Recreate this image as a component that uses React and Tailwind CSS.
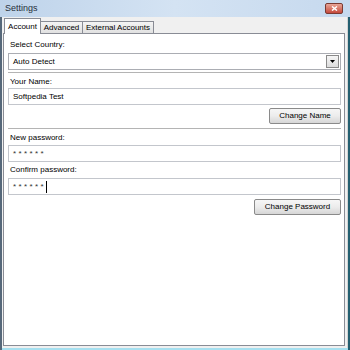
import React from "react"

const font = { fontFamily: "'Liberation Sans', Arial, sans-serif" }

function Field({ children, cursor }) {
  return (
    <div className="h-[17px] border border-[#c3c6cc] bg-white flex items-center pl-[4px] text-black">
      {children}
      {cursor && <span className="w-px h-[12px] bg-black" />}
    </div>
  )
}

function Stars() {
  return <span className="text-[8px] tracking-[2.4px] text-[#333]">******</span>
}

function Button({ children, width }) {
  return (
    <div
      className={`${width} h-[16px] border border-[#8a8a8a] rounded-[2px] bg-gradient-to-b from-[#f6f6f6] via-[#ececec] to-[#d6d6d6] flex items-center justify-center text-black`}
    >
      {children}
    </div>
  )
}

function Separator() {
  return <div className="h-[2px] border-t border-t-[#b4b4b4] border-b border-b-white" />
}

export default function App() {
  return (
    <div className="w-[350px] h-[350px] flex flex-col bg-[#1d5f73] overflow-hidden" style={font}>
      {/* title bar */}
      <div className="h-[17px] shrink-0 flex items-center justify-between bg-gradient-to-r from-[#bed3ea] via-[#d4e3f3] to-[#c6d9ee] pl-[5px] pr-[7px]">
        <span className="text-[9px] text-[#26303a] leading-none">Settings</span>
        <div className="w-[18px] h-[11px] rounded-[2px] border border-[#7a3a32] bg-gradient-to-b from-[#e7a598] to-[#c4473a] flex items-center justify-center">
          <svg width="7" height="5" viewBox="0 0 7 5">
            <path d="M1 0.5 L6 4.5 M6 0.5 L1 4.5" stroke="white" strokeWidth="1.5" />
          </svg>
        </div>
      </div>
      {/* body */}
      <div className="flex-1 flex flex-col border-l-[2px] border-l-[#56687a] border-r-[2px] border-r-[#245f70]">
        <div className="flex-1 flex flex-col bg-[#f0f0f0] pl-px pr-[2px] pb-[2px] border-r border-r-[#d4d4d4]">
          {/* tabs */}
          <div className="h-[16px] shrink-0 flex items-end pl-px text-[8px] text-black">
            <div className="h-[16px] w-[37px] border border-b-0 border-[#898c95] bg-white flex items-center justify-center relative z-10 -mb-px">
              Account
            </div>
            <div className="h-[12px] w-[42px] border border-b-0 border-l-0 border-[#898c95] bg-gradient-to-b from-[#f4f4f4] to-[#e1e1e1] flex items-center justify-center">
              Advanced
            </div>
            <div className="h-[12px] w-[71px] border border-b-0 border-l-0 border-[#898c95] bg-gradient-to-b from-[#f4f4f4] to-[#e1e1e1] flex items-center justify-center">
              External Accounts
            </div>
          </div>
          {/* panel */}
          <div className="flex-1 border border-[#898c95] bg-white pl-[4px] pr-[3px] pt-[6px] flex flex-col text-[8px] text-black">
            <div className="h-[10px] leading-[10px] pl-[2px]">Select Country:</div>
            <div className="mt-[3px] h-[17px] border border-[#abadb3] bg-white flex items-center justify-between pl-[4px] pr-px">
              <span>Auto Detect</span>
              <div className="w-[13px] h-[13px] border border-[#8a8a8a] bg-gradient-to-b from-[#f6f6f6] to-[#dcdcdc] flex items-center justify-center">
                <svg width="5" height="3" viewBox="0 0 5 3">
                  <path d="M0 0 H5 L2.5 3 Z" fill="black" />
                </svg>
              </div>
            </div>
            <div className="mt-[2px]">
              <Separator />
            </div>
            <div className="mt-[3px] h-[10px] leading-[10px] pl-[2px]">Your Name:</div>
            <div className="mt-px">
              <Field>Softpedia Test</Field>
            </div>
            <div className="mt-[3px] flex justify-end">
              <Button width="w-[72px]">Change Name</Button>
            </div>
            <div className="mt-[4px]">
              <Separator />
            </div>
            <div className="mt-[3px] h-[10px] leading-[10px] pl-[2px]">New password:</div>
            <div className="mt-[2px]">
              <Field>
                <Stars />
              </Field>
            </div>
            <div className="mt-[3px] h-[10px] leading-[10px] pl-[2px]">Confirm password:</div>
            <div className="mt-[3px]">
              <Field cursor>
                <Stars />
              </Field>
            </div>
            <div className="mt-[4px] flex justify-end">
              <Button width="w-[87px]">Change Password</Button>
            </div>
          </div>
        </div>
        <div className="h-[2px] shrink-0 bg-[#a6e0f0]" />
      </div>
    </div>
  )
}
